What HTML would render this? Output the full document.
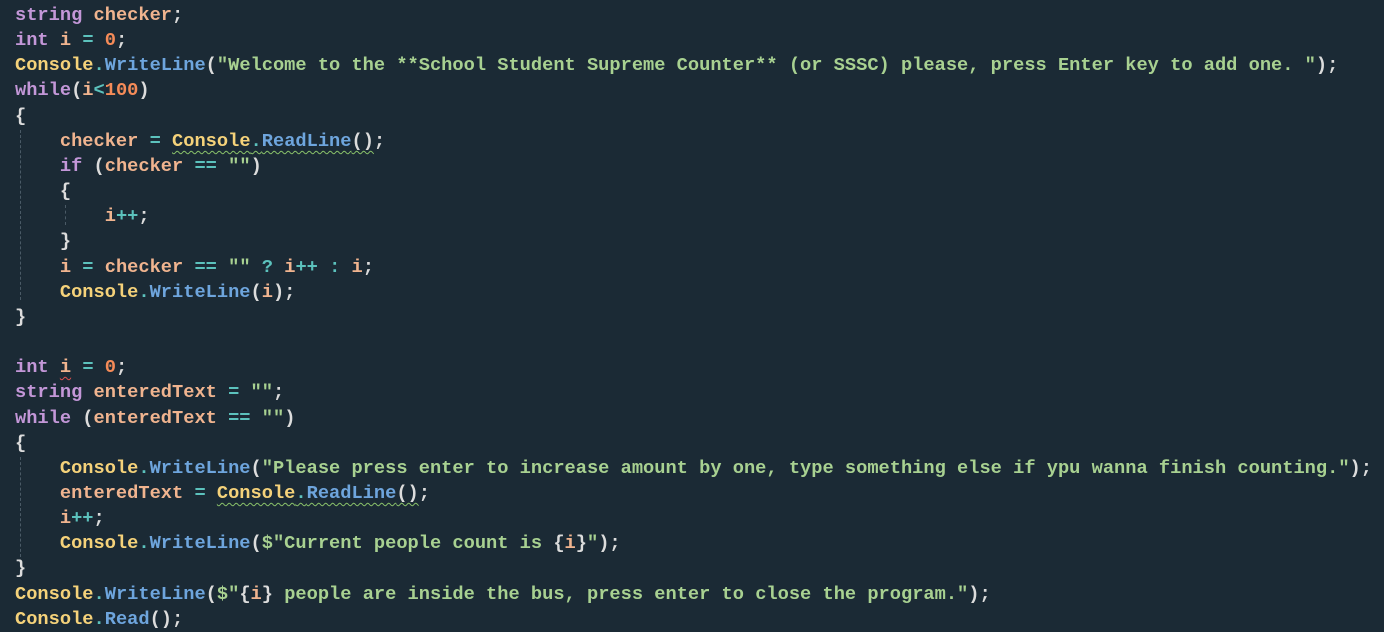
<!DOCTYPE html>
<html><head><meta charset="utf-8"><style>
html,body{margin:0;padding:0;background:#1b2a35;width:1384px;height:632px;overflow:hidden}
pre{margin:0;padding:3px 0 0 15px;font-family:"Liberation Mono",monospace;font-size:18.7px;line-height:25.15px;font-weight:bold;color:#dcdcdc;position:relative}
.k{color:#c397d8}.v{color:#f0b48f}.c{color:#f5d27a}.m{color:#6ea5dd}.s{color:#a8d191}.n{color:#f58b58}.o{color:#5cc2bd}
.w{text-decoration:underline wavy #8ac26a;text-underline-offset:4px;text-decoration-thickness:1px}
.r{text-decoration:underline wavy #e05050;text-underline-offset:4px;text-decoration-thickness:1px}
.g{position:absolute;width:0;border-left:1px dashed #4a5a66}
</style></head><body>
<div class="g" style="left:20px;top:130px;height:170px"></div>
<div class="g" style="left:65px;top:205px;height:20px"></div>
<div class="g" style="left:20px;top:457px;height:100px"></div>
<pre><span class="k">string</span> <span class="v">checker</span>;
<span class="k">int</span> <span class="v">i</span> <span class="o">=</span> <span class="n">0</span>;
<span class="c">Console</span><span class="o">.</span><span class="m">WriteLine</span>(<span class="s">"Welcome to the **School Student Supreme Counter** (or SSSC) please, press Enter key to add one. "</span>);
<span class="k">while</span>(<span class="v">i</span><span class="o">&lt;</span><span class="n">100</span>)
{
    <span class="v">checker</span> <span class="o">=</span> <span class="w"><span class="c">Console</span><span class="o">.</span><span class="m">ReadLine</span>()</span>;
    <span class="k">if</span> (<span class="v">checker</span> <span class="o">==</span> <span class="s">""</span>)
    {
        <span class="v">i</span><span class="o">++</span>;
    }
    <span class="v">i</span> <span class="o">=</span> <span class="v">checker</span> <span class="o">==</span> <span class="s">""</span> <span class="o">?</span> <span class="v">i</span><span class="o">++</span> <span class="o">:</span> <span class="v">i</span>;
    <span class="c">Console</span><span class="o">.</span><span class="m">WriteLine</span>(<span class="v">i</span>);
}

<span class="k">int</span> <span class="v r">i</span> <span class="o">=</span> <span class="n">0</span>;
<span class="k">string</span> <span class="v">enteredText</span> <span class="o">=</span> <span class="s">""</span>;
<span class="k">while</span> (<span class="v">enteredText</span> <span class="o">==</span> <span class="s">""</span>)
{
    <span class="c">Console</span><span class="o">.</span><span class="m">WriteLine</span>(<span class="s">"Please press enter to increase amount by one, type something else if ypu wanna finish counting."</span>);
    <span class="v">enteredText</span> <span class="o">=</span> <span class="w"><span class="c">Console</span><span class="o">.</span><span class="m">ReadLine</span>()</span>;
    <span class="v">i</span><span class="o">++</span>;
    <span class="c">Console</span><span class="o">.</span><span class="m">WriteLine</span>(<span class="s">$"Current people count is </span>{<span class="v">i</span>}<span class="s">"</span>);
}
<span class="c">Console</span><span class="o">.</span><span class="m">WriteLine</span>(<span class="s">$"</span>{<span class="v">i</span>}<span class="s"> people are inside the bus, press enter to close the program."</span>);
<span class="c">Console</span><span class="o">.</span><span class="m">Read</span>();</pre>
</body></html>
